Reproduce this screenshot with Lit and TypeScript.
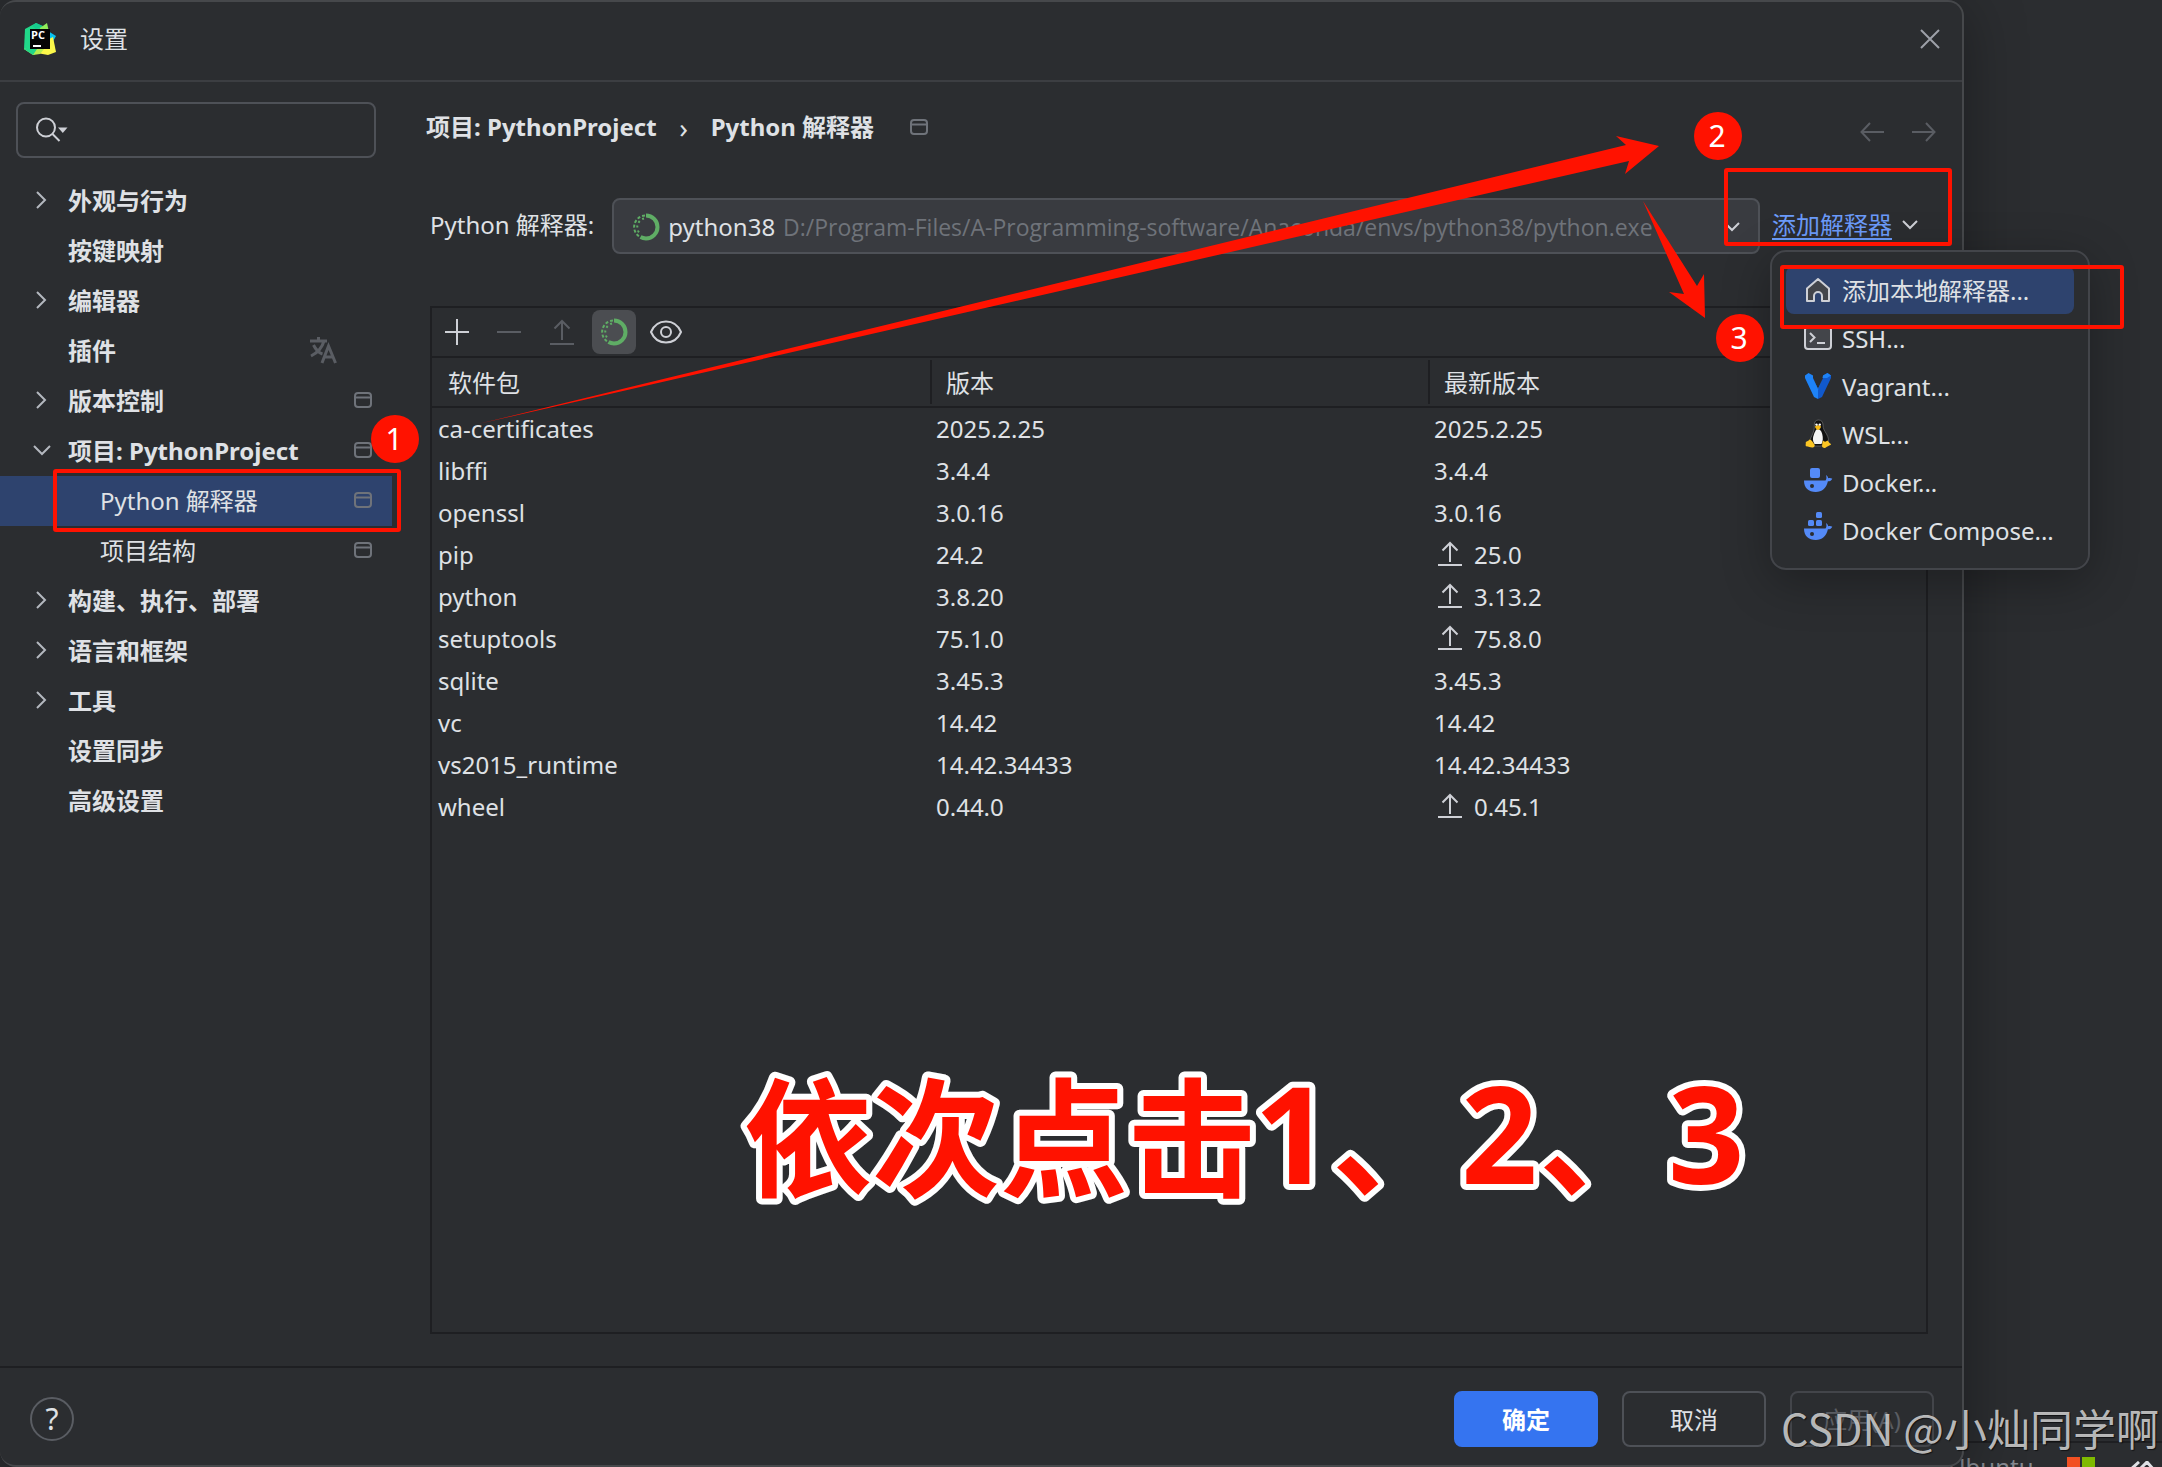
import { LitElement, html, css, svg, nothing } from "lit";
import { customElement, property, state } from "lit/decorators.js";
import { classMap } from "lit/directives/class-map.js";

type Glyph = { w: number; h: number; body: unknown };

const ring = svg`
  <path d="M14 2.5A11.5 11.5 0 0 1 14 25.500a11.500 11.500 0 0 1-5.500-1.400" fill="none" stroke="#5fad65" stroke-width="4"/>
  <path d="M13 2.500A11.500 11.500 0 0 0 8 24" fill="none" stroke="#5fad65" stroke-width="2" stroke-dasharray="3 2"/>
  <path d="M12 5.500A9 9 0 0 0 9 21.500" fill="none" stroke="#5fad65" stroke-width="2" stroke-dasharray="2 3"/>`;

const whale = svg`<path fill="#548af7" d="M0 12.500h21.500c.8-.8 1-1.800.9-3.200l-.3-2.300c1.300.9 1.900 2 2 3.200 1.500-.4 2.900-.3 4.200.5-.7 1.700-2.200 2.600-4.400 2.600C22.300 20.500 18 24 11.800 24 4.500 24 0 20 0 12.500z"/><circle cx="8" cy="18" r="2" fill="#2b2d30"/>`;

const glyphs: Record<string, Glyph> = {
  pycharm: {
    w: 32,
    h: 32,
    body: svg`
      <path d="M1 6 12 0l8 4-6 24-4 4L0 26z" fill="#21d789"/>
      <path d="M8 3 12 0l7 3-7 3z" fill="#16c98d"/>
      <path d="M16 5 23 0l2 9-9 3z" fill="#8fec5a"/>
      <path d="M24 8 32 13l-4 7-5-3z" fill="#07c3f2"/>
      <path d="M10 26 27 15l2-1 3 15-8 3-11-2z" fill="#fcf84a"/>
      <path d="M0 26 8 24l12 2-4 5-7 1z" fill="#b6ee4f"/>
      <path d="M0 26 5 24l8 2-4 6z" fill="#21d789"/>
      <path d="M6 6h20v20H6z" fill="#050505"/>
      <path d="M9 22h8v2H9z" fill="#fff"/>
      <text x="7" y="16" font-family="Open Sans, Noto Sans, sans-serif" font-weight="700" font-size="11" fill="#fff">PC</text>`,
  },
  close: { w: 18, h: 18, body: svg`<path d="M0 0l18 18M18 0 0 18" stroke="#9da0a8" stroke-width="2" fill="none"/>` },
  search: {
    w: 32,
    h: 26,
    body: svg`<circle cx="10" cy="10.500" r="9" fill="none" stroke="#ced0d6" stroke-width="2"/><path d="M16.500 17l7 7" stroke="#ced0d6" stroke-width="2"/><path d="M22 10.500h9.500L26.800 16z" fill="#ced0d6"/>`,
  },
  right: { w: 12, h: 18, body: svg`<path d="M1 1l8 8-8 8" fill="none" stroke="#b4b8bf" stroke-width="2"/>` },
  down: { w: 18, h: 12, body: svg`<path d="M1 2l8 8 8-8" fill="none" stroke="#b4b8bf" stroke-width="2"/>` },
  window: {
    w: 18,
    h: 16,
    body: svg`<rect x="1" y="1" width="16" height="14" rx="3" fill="none" stroke="#6f737a" stroke-width="2"/><path d="M1 5.500h16" stroke="#6f737a" stroke-width="2"/>`,
  },
  translate: {
    w: 28,
    h: 28,
    body: svg`<g fill="none" stroke="#5a5d63" stroke-width="3"><path d="M0 5h17M8.500 1v4M14 5C12 12 7 17 1 20M3.500 9c2 4 6 8 9 9"/><path d="M12 27l6.500-17L25.500 27M14.500 21h9"/></g>`,
  },
  plus: { w: 26, h: 26, body: svg`<path d="M12 0v26M0 13h24" stroke="#ced0d6" stroke-width="2"/>` },
  minus: { w: 26, h: 26, body: svg`<path d="M0 13h24" stroke="#5a5d63" stroke-width="2"/>` },
  upgradeOff: { w: 24, h: 26, body: svg`<path d="M12 2v19M4.500 9.500 12 2l7.500 7.500M0 25h24" fill="none" stroke="#5a5d63" stroke-width="2"/>` },
  upgrade: { w: 24, h: 26, body: svg`<path d="M12 1v19M4.500 8.500 12 1l7.500 7.500M0 23h24" fill="none" stroke="#ced0d6" stroke-width="2"/>` },
  ring: { w: 28, h: 28, body: ring },
  eye: {
    w: 32,
    h: 24,
    body: svg`<path d="M1 12C4 5 9 1.500 16 1.500S28 5 31 12c-3 7-8 10.500-15 10.500S4 19 1 12z" fill="none" stroke="#ced0d6" stroke-width="2"/><circle cx="16" cy="12" r="5" fill="none" stroke="#ced0d6" stroke-width="2"/>`,
  },
  back: { w: 24, h: 20, body: svg`<path d="M24 10H2M10 1 1.500 10l8.500 9" fill="none" stroke="#5a5d63" stroke-width="2"/>` },
  forward: { w: 24, h: 20, body: svg`<path d="M0 10h22M14 1l8.500 9-8.500 9" fill="none" stroke="#5a5d63" stroke-width="2"/>` },
  chevron: { w: 16, h: 12, body: svg`<path d="M1 2l7 7 7-7" fill="none" stroke="#ced0d6" stroke-width="2"/>` },
  home: {
    w: 28,
    h: 28,
    body: svg`<path d="M3 12.500 14 3l11 9.500V25h-7v-5a4 4 0 0 0-8 0v5H3z" fill="#43454a" stroke="#ced0d6" stroke-width="2" stroke-linejoin="round"/>`,
  },
  ssh: {
    w: 28,
    h: 28,
    body: svg`<rect x="1" y="3" width="26" height="22" rx="3" fill="#43454a" stroke="#ced0d6" stroke-width="2"/><path d="M6 9l4.500 4.500L6 18" fill="none" stroke="#ced0d6" stroke-width="2"/><path d="M13 19h8" stroke="#ced0d6" stroke-width="2"/>`,
  },
  vagrant: {
    w: 28,
    h: 28,
    body: svg`<path d="M1 3.500 4.500 1 9 3.500v2.500l5 11v10l-4-2L1 6z" fill="#1e83f7"/><path d="M27 3.500 23.500 1 19 3.500v2.500l-5 11v10l4-2L27 6z" fill="#1159cc"/><path d="M19 3.500 23.500 1 27 3.500l-4 2.500-4.500 0zM9 6l5 11 4.500-10.500L14 18z" fill="#1e83f7"/>`,
  },
  tux: {
    w: 28,
    h: 28,
    body: svg`
      <path d="M14.500 0c3 0 4.500 2 4.500 5 0 4 1.500 5.500 3.500 9s2.500 6.500 1.500 9l-7 3h-7L6 22c0-4 2-6 3-9s1.500-4.500 1.300-8c-.1-3 1.400-5 4.200-5z" fill="#111" stroke="#8a8a8a" stroke-width=".5"/>
      <path d="M13.500 9c2 0 4 1.500 4.700 5 1 4 .8 7-.7 10h-7c-2-3-2-6-.6-9.500C11 12 12 9 13.500 9z" fill="#f4f4f4"/>
      <path d="M11 6.500c1.500-1.600 4.500-1.600 6 0 0 1.500-2 3.500-3 3.500s-3-2-3-3.500z" fill="#f5b916"/>
      <circle cx="12.500" cy="4.600" r="1.200" fill="#fff"/><circle cx="15.800" cy="4.600" r="1.200" fill="#fff"/>
      <path d="M5.500 19.500c2 0 3.500 3 5 5 .6 1.300 0 2.700-1.500 3-2.500.3-4-.8-7-1.200-.8-1 0-2.300-.2-4.300C3 21.300 4.500 21 5.500 19.500zM19 20.500c1 1.500 3 1.500 4.500 0 1.500 1.500 1.500 2.500 3.500 3.500.3 1.300-4 2-5.500 3.800-1.500.5-3 0-3.500-1.500.5-2 0-4 1-5.800z" fill="#fcc624"/>`,
  },
  docker: { w: 28, h: 28, body: svg`<rect x="6" y="0" width="10" height="10" rx="2" fill="#548af7"/>${whale}` },
  compose: {
    w: 28,
    h: 28,
    body: svg`<g fill="#548af7"><rect x="12" y="-4" width="6" height="6" rx="1.500"/><rect x="4" y="4" width="6" height="6" rx="1.500"/><rect x="12" y="4" width="6" height="6" rx="1.500"/></g>${whale}`,
  },
};

const icon = (name: string) => {
  const g = glyphs[name];
  return html`<svg class="icon" width=${g.w} height=${g.h} viewBox="0 0 ${g.w} ${g.h}" aria-hidden="true">${g.body}</svg>`;
};

const base = css`
  * {
    box-sizing: border-box;
  }
  .icon {
    display: block;
    flex: none;
    overflow: visible;
  }
  button,
  input,
  select {
    font: inherit;
    color: inherit;
    background: none;
    border: 0;
    padding: 0;
    margin: 0;
    outline: none;
  }
`;

interface Node {
  label: string;
  open?: boolean;
  leaf?: boolean;
  child?: boolean;
  project?: boolean;
  translated?: boolean;
  selected?: boolean;
}

const tree: Node[] = [
  { label: "外观与行为" },
  { label: "按键映射", leaf: true },
  { label: "编辑器" },
  { label: "插件", leaf: true, translated: true },
  { label: "版本控制", project: true },
  { label: "项目: PythonProject", open: true, project: true },
  { label: "Python 解释器", leaf: true, child: true, project: true, selected: true },
  { label: "项目结构", leaf: true, child: true, project: true },
  { label: "构建、执行、部署" },
  { label: "语言和框架" },
  { label: "工具" },
  { label: "设置同步", leaf: true },
  { label: "高级设置", leaf: true },
];

@customElement("settings-tree")
class SettingsTree extends LitElement {
  static styles = [
    base,
    css`
      :host {
        display: block;
        padding-top: 20px;
      }
      .search {
        display: flex;
        align-items: center;
        gap: 8px;
        height: 56px;
        margin: 0 24px 18px 16px;
        padding: 0 18px;
        border: 2px solid #4e5157;
        border-radius: 8px;
      }
      .search input {
        flex: 1;
        min-width: 0;
      }
      .list {
        list-style: none;
        margin: 0;
        padding: 0;
      }
      .node {
        display: flex;
        align-items: center;
        height: 50px;
        margin-right: 8px;
        padding-right: 20px;
        color: inherit;
        text-decoration: none;
        font-weight: 700;
      }
      .node .icon {
        margin-bottom: 2px;
      }
      .twisty {
        display: flex;
        justify-content: center;
        width: 52px;
        margin-left: 16px;
      }
      .child {
        font-weight: 400;
      }
      .child .twisty {
        margin-right: 32px;
      }
      .selected {
        background: #2e436e;
      }
      .name {
        flex: 1;
      }
      .translated {
        padding-right: 54px;
      }
    `,
  ];

  render() {
    return html`
      <label class="search">${icon("search")}<input type="text" aria-label="搜索设置" /></label>
      <ul class="list">
        ${tree.map(
          (n) => html`<li>
            <a href="#" class=${classMap({ node: true, child: !!n.child, selected: !!n.selected, translated: !!n.translated })}>
              <span class="twisty">${n.leaf ? nothing : icon(n.open ? "down" : "right")}</span>
              <span class="name">${n.label}</span>
              ${n.translated ? icon("translate") : nothing} ${n.project ? icon("window") : nothing}
            </a>
          </li>`,
        )}
      </ul>
    `;
  }
}

const packages: [string, string, string, boolean?][] = [
  ["ca-certificates", "2025.2.25", "2025.2.25"],
  ["libffi", "3.4.4", "3.4.4"],
  ["openssl", "3.0.16", "3.0.16"],
  ["pip", "24.2", "25.0", true],
  ["python", "3.8.20", "3.13.2", true],
  ["setuptools", "75.1.0", "75.8.0", true],
  ["sqlite", "3.45.3", "3.45.3"],
  ["vc", "14.42", "14.42"],
  ["vs2015_runtime", "14.42.34433", "14.42.34433"],
  ["wheel", "0.44.0", "0.45.1", true],
];

@customElement("package-panel")
class PackagePanel extends LitElement {
  static styles = [
    base,
    css`
      :host {
        display: block;
        border: 2px solid #1e1f22;
      }
      .tools {
        display: flex;
        align-items: center;
        gap: 8px;
        height: 50px;
        padding: 0 4px;
        border-bottom: 2px solid #1e1f22;
      }
      .tool {
        display: flex;
        align-items: center;
        justify-content: center;
        width: 44px;
        height: 44px;
        border-radius: 8px;
      }
      .on {
        background: #4b4d51;
      }
      .table {
        width: 100%;
        table-layout: fixed;
        border-collapse: separate;
        border-spacing: 0;
      }
      .table th {
        height: 50px;
        padding: 2px 0;
        border-bottom: 2px solid #1e1f22;
        font-weight: 400;
        text-align: left;
      }
      .head {
        display: block;
        height: 44px;
        line-height: 46px;
        padding-left: 14px;
        border-left: 2px solid #1e1f22;
      }
      .table th:first-child .head {
        border-color: transparent;
      }
      .table td {
        height: 42px;
        padding: 0 6px;
      }
      .latest {
        display: flex;
        align-items: center;
        gap: 12px;
      }
      .latest .icon {
        margin-left: 4px;
      }
    `,
  ];

  render() {
    const tools: [string, string][] = [
      ["plus", "安装"],
      ["minus", "卸载"],
      ["upgradeOff", "升级"],
      ["ring", "使用 Conda 软件包管理器"],
      ["eye", "显示早期版本"],
    ];
    return html`
      <div class="tools" role="toolbar">
        ${tools.map(([g, name]) => html`<button class=${classMap({ tool: true, on: g === "ring" })} aria-label=${name}>${icon(g)}</button>`)}
      </div>
      <table class="table">
        <thead>
          <tr>
            ${["软件包", "版本", "最新版本"].map((h) => html`<th scope="col"><span class="head">${h}</span></th>`)}
          </tr>
        </thead>
        <tbody>
          ${packages.map(
            ([name, version, latest, newer]) => html`<tr>
              <td>${name}</td>
              <td>${version}</td>
              <td><span class="latest">${newer ? icon("upgrade") : nothing}${latest}</span></td>
            </tr>`,
          )}
        </tbody>
      </table>
    `;
  }
}

@customElement("interpreter-menu")
class InterpreterMenu extends LitElement {
  @state() private active = 0;

  static styles = [
    base,
    css`
      :host {
        display: block;
        width: 320px;
        padding: 14px;
        background: #2b2d30;
        border: 2px solid #43454a;
        border-radius: 16px;
        box-shadow: 0 12px 48px rgba(0, 0, 0, 0.3);
      }
      .item {
        display: flex;
        align-items: center;
        gap: 10px;
        width: 100%;
        height: 48px;
        padding: 0 18px;
        border-radius: 8px;
        text-align: left;
        white-space: nowrap;
      }
      .item span {
        padding-top: 2px;
      }
      .active {
        background: #2e436e;
      }
    `,
  ];

  render() {
    const items = [
      ["home", "添加本地解释器..."],
      ["ssh", "SSH..."],
      ["vagrant", "Vagrant..."],
      ["tux", "WSL..."],
      ["docker", "Docker..."],
      ["compose", "Docker Compose..."],
    ];
    return items.map(
      ([g, label], i) => html`<button
        class=${classMap({ item: true, active: i === this.active })}
        @click=${() => (this.active = i)}
      >
        ${icon(g)}<span>${label}</span>
      </button>`,
    );
  }
}

@customElement("step-notes")
class StepNotes extends LitElement {
  static styles = css`
    :host {
      position: absolute;
      inset: 0;
      pointer-events: none;
    }
    .layer {
      display: block;
      width: 100%;
      height: 100%;
      overflow: visible;
    }
    .frame {
      fill: none;
      stroke: #ff1200;
      stroke-width: 4px;
    }
    .mark {
      fill: #ff1200;
    }
    .digit {
      fill: #fff;
      font-size: 30px;
      text-anchor: middle;
    }
    .banner {
      fill: #ff1200;
      stroke: #fff;
      stroke-width: 12px;
      stroke-linejoin: round;
      paint-order: stroke;
      font-size: 128px;
      font-weight: 700;
    }
    .number {
      font-size: 134px;
    }
  `;

  render() {
    const frames = [
      [55, 471, 344, 59],
      [1726, 170, 224, 74],
      [1782, 267, 340, 60],
    ];
    const dots: [number, number][] = [
      [395, 439],
      [1718, 136],
      [1740, 338],
    ];
    return html`<svg class="layer">
      <path class="mark" d="M478 424 1626 145l-10-9 43 10-34 28 4-13z" />
      <path class="mark" d="M1643 201l54 85 7-12 1 44-36-26 15 2z" />
      ${frames.map(([x, y, w, h]) => svg`<rect class="frame" x=${x} y=${y} width=${w} height=${h} rx="1"/>`)}
      ${dots.map(
        ([x, y], i) => svg`<circle class="mark" cx=${x} cy=${y} r="24"/><text class="digit" x=${x - 1} y=${y + 11}>${i + 1}</text>`,
      )}
      <text class="banner" x="744" y="1187">依次点击${[0, 1, 2].map(
        (i) => svg`<tspan class="number" x=${1254 + 207 * i} y="1184">${i + 1}</tspan>${i < 2 ? svg`<tspan x=${1332 + 207 * i} y="1187">、</tspan>` : nothing}`,
      )}</text>
    </svg>`;
  }
}

@customElement("app-root")
class AppRoot extends LitElement {
  @property() heading = "设置";

  static styles = [
    base,
    css`
      :host {
        position: relative;
        display: grid;
        grid-template-columns: minmax(0, 1fr) 198px;
        height: 100vh;
        min-height: 900px;
        overflow: hidden;
        background: #2b2d30;
        color: #dfe1e5;
        font-family: "Noto Sans", "Noto Sans CJK SC", sans-serif;
        font-size: 24px;
        line-height: 32px;
      }
      .dialog {
        position: relative;
        z-index: 1;
        display: flex;
        flex-direction: column;
        background: #2b2d30;
        border: 2px solid #46484b;
        border-left: 0;
        border-radius: 16px;
        box-shadow: 0 8px 60px rgba(0, 0, 0, 0.35);
      }
      .title {
        display: flex;
        align-items: center;
        gap: 24px;
        height: 80px;
        padding: 0 23px 4px 24px;
        border-bottom: 2px solid #3c3e42;
      }
      .title h1 {
        flex: 1;
        margin: 0;
        font-size: 24px;
        font-weight: 400;
      }
      .body {
        flex: 1;
        display: grid;
        grid-template-columns: 400px minmax(0, 1fr);
      }
      .main {
        display: flex;
        flex-direction: column;
        padding: 20px 34px 32px 30px;
      }
      .crumbs {
        display: flex;
        align-items: center;
        height: 50px;
        margin: 0 -8px 46px -4px;
        font-weight: 700;
      }
      .sep {
        width: 54px;
        text-align: center;
        font-size: 28px;
        font-weight: 400;
      }
      .crumbs > .icon {
        margin-left: 36px;
      }
      .history {
        display: flex;
        align-self: flex-end;
        gap: 28px;
        height: 40px;
        margin-left: auto;
      }
      .row {
        display: flex;
        align-items: center;
        height: 56px;
        margin-bottom: 52px;
      }
      .row label {
        padding-bottom: 2px;
      }
      .combo {
        flex: 1;
        display: flex;
        align-items: center;
        height: 56px;
        min-width: 0;
        margin: 0 12px 0 18px;
        padding: 2px 18px 0;
        background: #393b40;
        border: 2px solid #4e5157;
        border-radius: 8px;
      }
      .combo select {
        appearance: none;
        margin: 0 8px;
        field-sizing: content;
      }
      .path {
        flex: 1;
        color: #6f737a;
        font-family: "Open Sans", "Noto Sans", sans-serif;
        font-size: 23px;
        white-space: nowrap;
        overflow: hidden;
      }
      .add {
        position: relative;
        display: flex;
        align-items: center;
        gap: 10px;
        height: 56px;
        padding: 0 10px 2px 0;
      }
      .link {
        color: #6b9bfa;
        text-underline-offset: 4px;
        text-decoration-thickness: 2px;
      }
      .menu {
        position: absolute;
        top: 52px;
        left: -2px;
      }
      .panel {
        flex: 1;
      }
      .footer {
        display: flex;
        align-items: center;
        gap: 24px;
        height: 99px;
        padding: 4px 28px 0 30px;
        border-top: 2px solid #1e1f22;
      }
      .help {
        width: 44px;
        height: 44px;
        margin-right: auto;
        border: 2px solid #5a5d63;
        border-radius: 22px;
        font-size: 30px;
      }
      .btn {
        width: 144px;
        height: 56px;
        padding-top: 2px;
        border: 2px solid #4e5157;
        border-radius: 8px;
      }
      .primary {
        background: #3574f0;
        border-color: #3574f0;
        color: #fff;
        font-weight: 700;
      }
      .btn:disabled {
        border-color: #43454a;
        color: #5a5d63;
      }
      .behind {
        display: flex;
        flex-direction: column;
        justify-content: flex-end;
      }
      .status {
        display: flex;
        align-items: flex-start;
        gap: 34px;
        height: 26px;
        margin-left: -16px;
        border-top: 2px solid #1e1f22;
        color: #868a91;
        line-height: 48px;
      }
      .flag {
        display: grid;
        grid-template-columns: 13px 13px;
        gap: 2px;
        height: 13px;
        margin-top: 14px;
      }
      .orange {
        background: #f25022;
      }
      .green {
        background: #7fba00;
      }
      .caret {
        margin-top: 18px;
      }
      .watermark {
        position: absolute;
        z-index: 3;
        right: 3px;
        bottom: 10px;
        color: rgba(220, 220, 220, 0.82);
        font-family: "Noto Sans CJK SC", sans-serif;
        font-size: 43px;
        font-weight: 400;
        line-height: 60px;
        text-shadow: 1px 1px 1px rgba(0, 0, 0, 0.6);
        white-space: nowrap;
      }
      .notes {
        z-index: 2;
      }
    `,
  ];

  render() {
    return html`
      <section class="dialog" role="dialog" aria-label=${this.heading}>
        <header class="title">
          ${icon("pycharm")}
          <h1>${this.heading}</h1>
          <button aria-label="关闭">${icon("close")}</button>
        </header>
        <div class="body">
          <settings-tree></settings-tree>
          <main class="main">
            <nav class="crumbs">
              <span>项目: PythonProject</span><span class="sep">›</span><span>Python 解释器</span>${icon("window")}
              <span class="history">
                <button aria-label="后退">${icon("back")}</button>
                <button aria-label="前进">${icon("forward")}</button>
              </span>
            </nav>
            <div class="row">
              <label for="interpreter">Python 解释器:</label>
              <div class="combo">
                ${icon("ring")}
                <select id="interpreter"><option>python38</option></select>
                <span class="path">D:/Program-Files/A-Programming-software/Anaconda/envs/python38/python.exe</span>
                ${icon("chevron")}
              </div>
              <div class="add">
                <a class="link" href="#">添加解释器</a>${icon("chevron")}
                <interpreter-menu class="menu"></interpreter-menu>
              </div>
            </div>
            <package-panel class="panel"></package-panel>
          </main>
        </div>
        <footer class="footer">
          <button class="help" aria-label="帮助">?</button>
          <button class="btn primary">确定</button>
          <button class="btn">取消</button>
          <button class="btn" disabled>应用(A)</button>
        </footer>
      </section>
      <aside class="behind">
        <div class="status">
          <span>Ubuntu</span>
          <span class="flag"><span class="orange"></span><span class="green"></span></span>
          <svg class="caret" width="26" height="10" viewBox="0 0 26 10" aria-hidden="true">
            <path d="M1 9 10 1M10 9l8-8 7 8" fill="none" stroke="#dfe1e5" stroke-width="3" />
          </svg>
        </div>
      </aside>
      <step-notes class="notes"></step-notes>
      <div class="watermark">CSDN @小灿同学啊</div>
    `;
  }
}
